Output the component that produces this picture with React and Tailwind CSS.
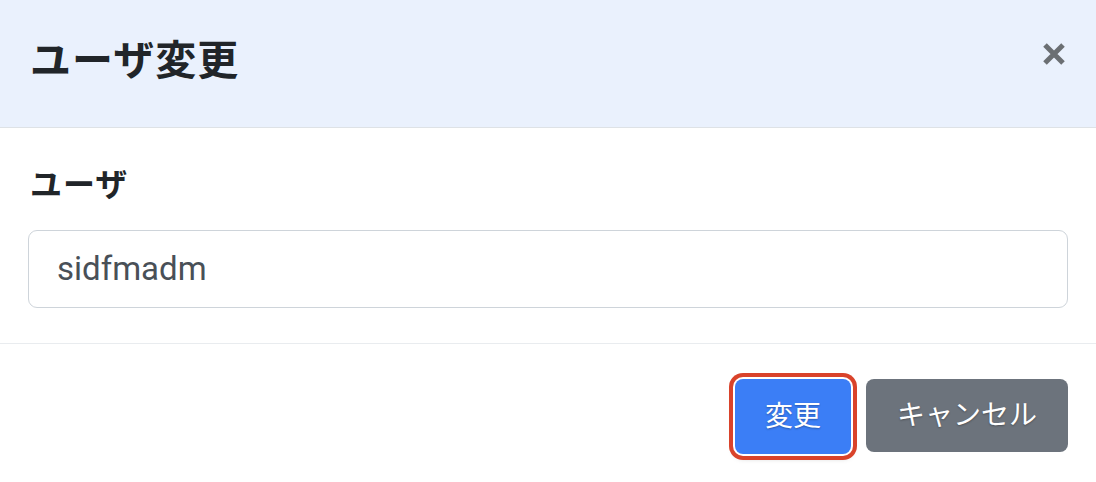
import React from "react";

const font = { fontFamily: "Roboto, 'Noto Sans CJK JP', sans-serif" };

export default function App() {
  return (
    <div className="w-[1096px] h-[482px] bg-white text-[#212529]" style={font}>
      <div className="h-[128px] bg-[#eaf1fd] border-b border-[#dee2e6] flex items-center justify-between pl-[30px] pr-[30px]">
        <h5 className="text-[41px] font-bold leading-none tracking-[1px] -mt-[4px]">ユーザ変更</h5>
        <button className="text-[#6b6f73] -mt-[20px]">
          <svg width="24" height="24" viewBox="0 0 24 24">
            <path d="M3 3L21 21M21 3L3 21" stroke="currentColor" strokeWidth="5" strokeLinecap="butt" />
          </svg>
        </button>
      </div>
      <div className="px-[28px] pt-[33px] pb-[35px] border-b border-[#e9ecef]">
        <label className="block text-[32px] font-bold leading-[48px] mb-[21px] pl-[2px] tracking-[1px]">ユーザ</label>
        <div className="h-[78px] rounded-[9px] border border-[#ced4da] flex items-center pl-[28px] text-[33px] text-[#495057]">
          sidfmadm
        </div>
      </div>
      <div className="flex justify-end gap-[15px] pt-[35px] pr-[28px]">
        <button className="w-[116px] h-[75px] rounded-[8px] bg-[#3b7ef6] text-white text-[28px] ring-4 ring-[#d9432b] ring-offset-2 shadow-[0_3px_6px_rgba(0,0,0,0.35)] [text-shadow:0_1px_2px_rgba(0,0,0,0.3)]">
          変更
        </button>
        <button className="w-[202px] h-[73px] rounded-[8px] bg-[#6c737c] text-white text-[28px] [text-shadow:0_1px_2px_rgba(0,0,0,0.3)]">
          キャンセル
        </button>
      </div>
    </div>
  );
}
